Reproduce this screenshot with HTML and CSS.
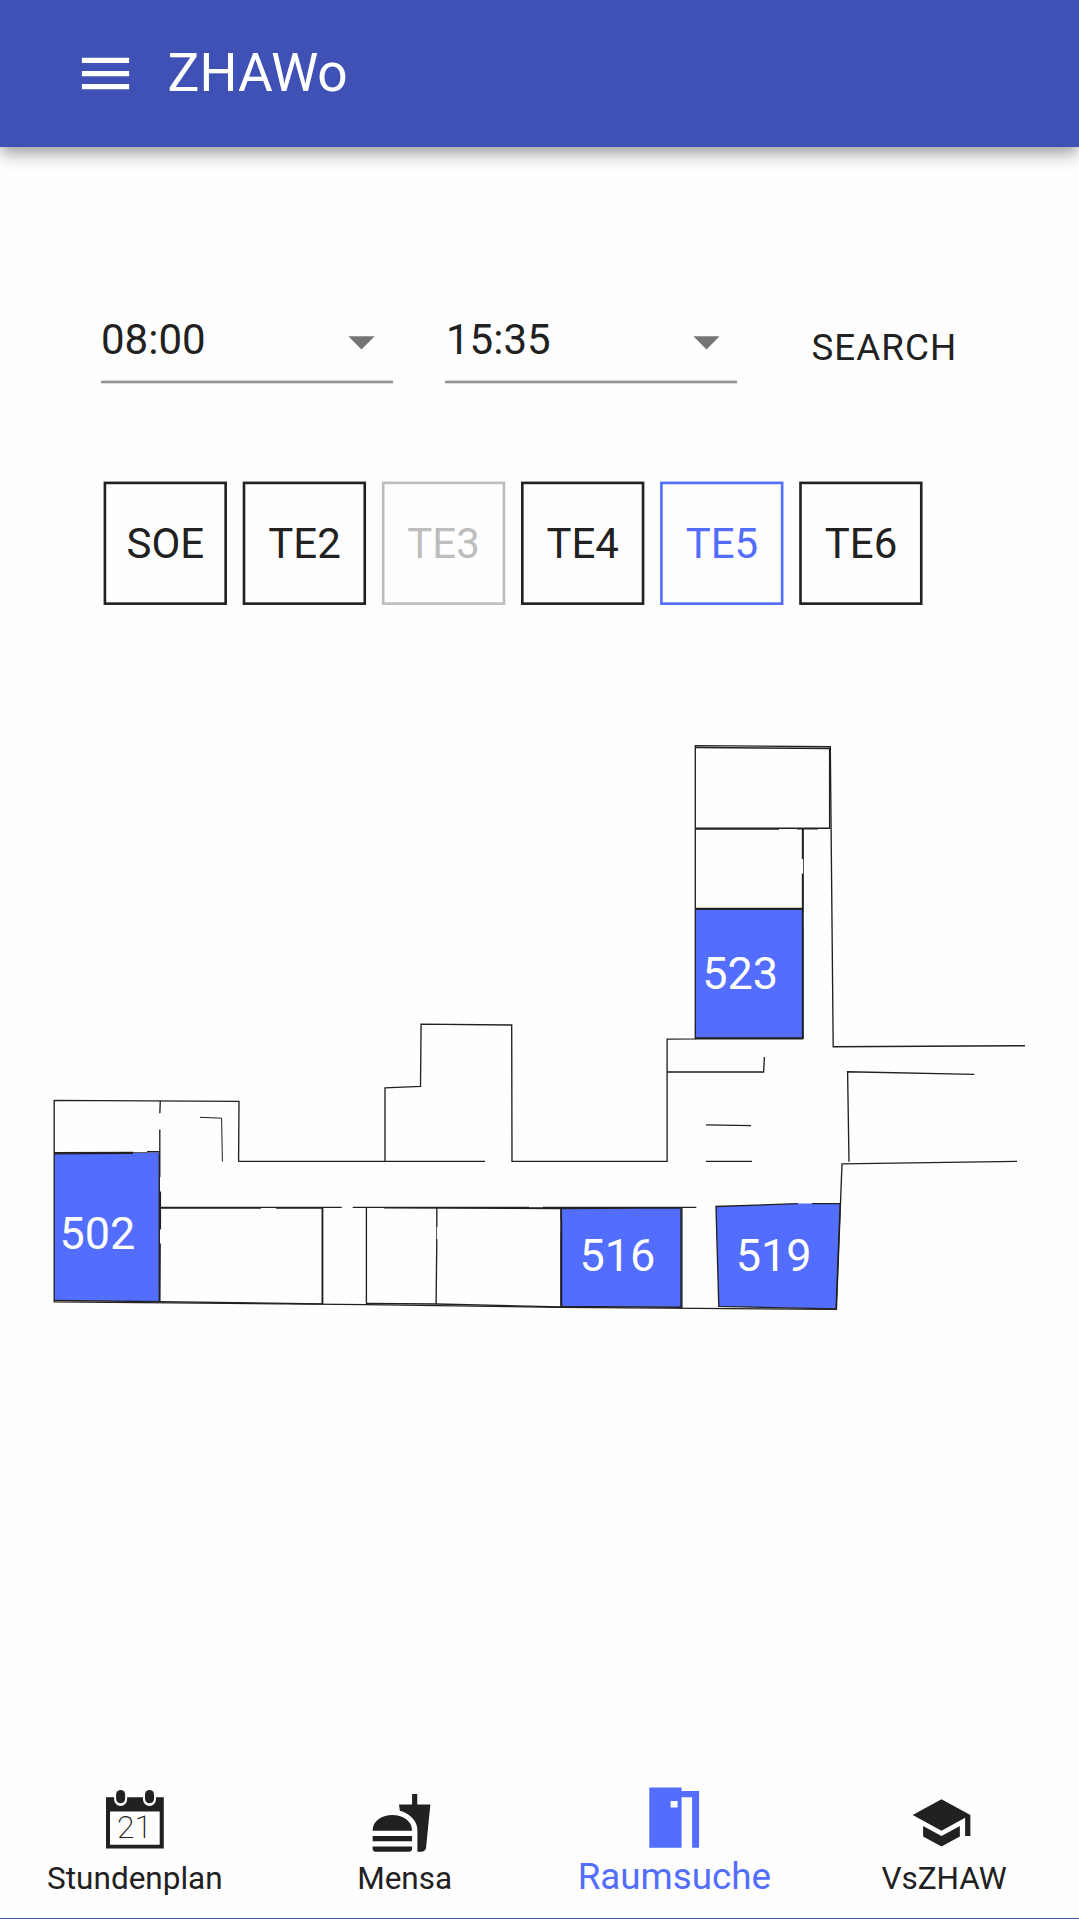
FILE: index.html
```html
<!DOCTYPE html>
<html lang="de">
<head>
<meta charset="utf-8">
<title>ZHAWo</title>
<link rel="stylesheet" href="styles.css">
</head>
<body>
<div class="app">
  <header class="app-bar">
    <svg class="menu-icon" viewBox="0 0 24 24"><path d="M3 18h18v-2H3v2zm0-5h18v-2H3v2zm0-7v2h18V6H3z"/></svg>
    <h1 class="title">ZHAWo</h1>
  </header>

  <main class="content">
    <form class="search-form">
      <div class="select"><span>08:00</span><svg class="arrow" viewBox="0 0 24 24"><path d="M7 10l5 5 5-5z"/></svg></div>
      <div class="select"><span>15:35</span><svg class="arrow" viewBox="0 0 24 24"><path d="M7 10l5 5 5-5z"/></svg></div>
      <button class="search-button" type="button">SEARCH</button>
    </form>

    <svg class="buildings" viewBox="0 0 830 130">
      <g class="building"><rect x="4.9" y="2.9" width="120.75" height="120.75"/><text x="65.4" y="78">SOE</text></g>
      <g class="building"><rect x="144" y="2.9" width="120.75" height="120.75"/><text x="204.5" y="78">TE2</text></g>
      <g class="building disabled"><rect x="283.2" y="2.9" width="120.75" height="120.75"/><text x="343.6" y="78">TE3</text></g>
      <g class="building"><rect x="422.3" y="2.9" width="120.75" height="120.75"/><text x="482.7" y="78">TE4</text></g>
      <g class="building selected"><rect x="561.4" y="2.9" width="120.75" height="120.75"/><text x="621.9" y="78">TE5</text></g>
      <g class="building"><rect x="700.5" y="2.9" width="120.75" height="120.75"/><text x="761" y="78">TE6</text></g>
    </svg>

    <svg class="floor-plan" viewBox="0 730 1079 600">
      <!-- free rooms -->
      <g class="room">
        <path d="M54.3 1153.3L159.6 1152.6V1301.3L54.3 1300.6z"/>
        <path d="M561 1208.3L681.3 1207.6V1307L561 1306.4z"/>
        <path d="M716 1206.4L797.7 1203.6H840L836 1308.6L718.8 1306.4z"/>
        <path d="M695.3 909H802.8L802.4 1038H695.3z"/>
      </g>
      <!-- doors -->
      <path class="door" d="M803.5 859V873.5M803.5 912.5V926.5M133 1152.5H147M261 1207.5H276M529 1207.5H543M436.5 1227V1239M560.5 1221.5V1233"/>
      <!-- outer walls -->
      <g class="wall">
        <path d="M238.6 1161.3L239 1101.3L54.2 1100.4V1301.8L366 1304.6L561 1307.4L836.4 1309.4L842 1163.9L1017 1161.3"/>
        <path d="M238.2 1161.3H485M385 1161V1087.9L420.5 1086.4L421.1 1024.1L511.7 1025L512 1161.3H667.1V1039.1L695.3 1038.9V745.6L830.3 746.7L833.2 1046.7L1025 1045.7"/>
        <path d="M667 1072H763.6L764.4 1057M706 1124.8L751 1125.6M706 1161.4H752M849 1161.7L847.6 1071.8L974.3 1074.4"/>
        <path d="M160.3 1101L159.8 1113.3M159.8 1129.5V1177M160.4 1191.5V1229.5M160.2 1243.5L159.9 1301.5"/>
        <path d="M54.2 1152.7L133 1152.5M147 1151.7H160"/>
        <path d="M161 1207.4H341.8M352.7 1207.4H529M543 1207.4H696.3"/>
        <path d="M322.2 1207.4V1304M366.4 1207.4V1304.4M436.8 1207.4V1227M436.8 1239L436.1 1304M681.9 1207.4V1308"/>
      </g>
      <path class="wall thin" d="M200 1117.3L221.6 1118.2L222.4 1161.6"/>
      <!-- room outlines -->
      <g class="wall">
        <path d="M695.3 747.5L829.6 748.5V828.2H695.3M695.3 829.1H779M797 828.7H818M802.5 828.2V859M803.2 828.2V859M802.5 873.5V912.5M803.2 873.5V912.5M802.5 912V1038M803.2 926.5V1039M695.3 908.4H802.6M695.3 909.2H802.6M695.3 1037.8H803M695.3 1038.8H803"/>
        <path d="M54.5 1153.8L133 1153.3M159.3 1153V1301M54.5 1300.5L160 1301.6L322 1303.9"/>
        <path d="M160 1208H261M276 1208H322.7V1304"/>
        <path d="M366 1303.4L436 1304L561 1306.8M384 1207.8L561 1208.6M561.4 1208.4V1221.5M560.8 1208.4V1221.5M561.6 1221V1307M560.8 1233V1307.5M561 1208.6L681 1207.8V1307.2L561 1306.3"/>
        <path d="M797.7 1203.7L716 1206.5L718.8 1306.4L836.1 1308.9L840.2 1203.6H812"/>
      </g>
      <g class="room-label">
        <text x="59.4" y="1249">502</text>
        <text x="579.5" y="1271">516</text>
        <text x="735.7" y="1271">519</text>
        <text x="702.2" y="989">523</text>
      </g>
    </svg>
  </main>

  <nav class="bottom-nav">
    <a class="nav-item">
      <svg class="nav-icon" viewBox="0 0 63 63">
        <path d="M3 9.3h57.8v51.2H3z"/>
        <path class="paper" d="M7 23.5h49.7v33.3H7z"/>
        <rect class="ring-gap" x="11.1" y="-1" width="13" height="19" rx="6.5"/>
        <rect class="ring-gap" x="40" y="-1" width="13" height="19" rx="6.5"/>
        <rect x="13.1" y="2" width="9" height="13.2" rx="4.5"/>
        <rect x="42" y="2" width="9" height="13.2" rx="4.5"/>
        <text class="day" x="31.5" y="50">21</text>
      </svg>
      <span>Stundenplan</span>
    </a>
    <a class="nav-item">
      <svg class="nav-icon glyph" viewBox="0 0 24 24"><path d="M18.06 22.99h1.66c.84 0 1.53-.64 1.63-1.46L23 5.05h-5V1h-1.97v4.05h-4.97l.3 2.34c1.71.47 3.31 1.32 4.27 2.26 1.44 1.42 2.43 2.89 2.43 5.29v8.05zM1 21.99V21h15.03v.99c0 .55-.45 1-1.01 1H2.01c-.56 0-1.01-.45-1.01-1zm15.03-7c0-8-15.03-8-15.03 0h15.03zM1.02 17h15v2h-15z"/></svg>
      <span>Mensa</span>
    </a>
    <a class="nav-item active">
      <svg class="nav-icon" viewBox="0 0 63 63"><path fill-rule="evenodd" d="M6.3-.5h32.3v3.6h17.5v56.6h-7V9.3H38.6v50.4H6.3zM27.6 13v6.6h7V13z"/></svg>
      <span>Raumsuche</span>
    </a>
    <a class="nav-item">
      <svg class="nav-icon glyph" viewBox="0 0 24 24"><path d="M5 13.18v4L12 21l7-3.82v-4L12 17l-7-3.82zM12 3L1 9l11 6 9-4.91V17h2V9L12 3z"/></svg>
      <span>VsZHAW</span>
    </a>
  </nav>
</div>
</body>
</html>
```
FILE: styles.css
```css
* { box-sizing: border-box; }

body {
  margin: 0;
  background: #fefefe;
  color: #212121;
  font-family: Roboto, "Noto Sans", sans-serif;
}

svg { display: block; }

.app {
  height: 1919px;
  display: flex;
  flex-direction: column;
  border-bottom: 1px solid #3f51b5;
}

.app-bar {
  height: 147px;
  flex: none;
  display: flex;
  align-items: center;
  padding-left: 73.5px;
  background: #3f51b5;
  color: #fff;
  box-shadow:
    0 5.25px 10.5px -2.6px rgba(0, 0, 0, .2),
    0 10.5px 13px 0 rgba(0, 0, 0, .14),
    0 2.6px 26px 0 rgba(0, 0, 0, .12);
}

.menu-icon { width: 63px; height: 63px; fill: currentColor; }

.title {
  margin: 0 0 1px 31px;
  font-size: 53.3px;
  font-weight: 400;
  line-height: 62px;
}

.content { flex: 1; }

.search-form {
  display: flex;
  margin: 153px 0 0 101px;
}

.select {
  width: 292px;
  height: 84px;
  margin-right: 52px;
  display: flex;
  align-items: center;
  justify-content: space-between;
  background: linear-gradient(#d4d4d4 1px, #949494 1px 3px, #dedede 3px) bottom / 100% 4px no-repeat;
  padding-bottom: 5px;
  font-size: 42px;
}

.select + .select { padding-left: 1px; margin-right: 54px; }

.arrow { width: 63px; height: 63px; margin: 3px .5px 0 0; fill: #757575; }
.select + .select .arrow { margin-right: -.5px; }

.search-button {
  margin: 12px 0 0;
  padding: 0 20.5px;
  border: 0;
  background: none;
  color: inherit;
  font: 400 36.75px/62px Roboto, sans-serif;
  letter-spacing: 1.05px;
}

.buildings { width: 830px; height: 130px; margin: 96px 0 0 100px; }
.building rect { fill: none; stroke: #212121; stroke-width: 2.625px; }
.building text { font-size: 42px; text-anchor: middle; fill: #212121; }
.building.disabled rect { stroke: #bdbdbd; }
.building.disabled text { fill: #bdbdbd; }
.building.selected rect { stroke: #536dfe; }
.building.selected text { fill: #536dfe; }

.floor-plan { width: 1079px; height: 600px; margin-top: 120px; }
.room { fill: #536dfe; }
.wall { fill: none; stroke: #212121; stroke-width: 1.35px; }
.wall.thin { stroke-width: 1px; }
.door { fill: none; stroke: #5a5a5a; stroke-width: 1px; }
.room-label { font-size: 45px; fill: #fff; }

.bottom-nav {
  display: grid;
  grid-template-columns: repeat(4, 1fr);
  height: 147px;
}

.nav-item {
  display: flex;
  flex-direction: column;
  align-items: center;
  padding-top: 17px;
  font-size: 31.5px;
}

.nav-item span { margin-top: 7px; line-height: 42px; }
.nav-item.active { color: #536dfe; font-size: 36.75px; }
.nav-item.active span { margin-top: 5px; }
.nav-icon { width: 63px; height: 63px; fill: currentColor; overflow: visible; }
.nav-icon.glyph { transform: translate(-3px, 3.3px); }
.nav-icon .paper, .nav-icon .ring-gap { fill: #fefefe; }
.nav-icon .day { font-size: 32px; font-weight: 200; text-anchor: middle; }
```
